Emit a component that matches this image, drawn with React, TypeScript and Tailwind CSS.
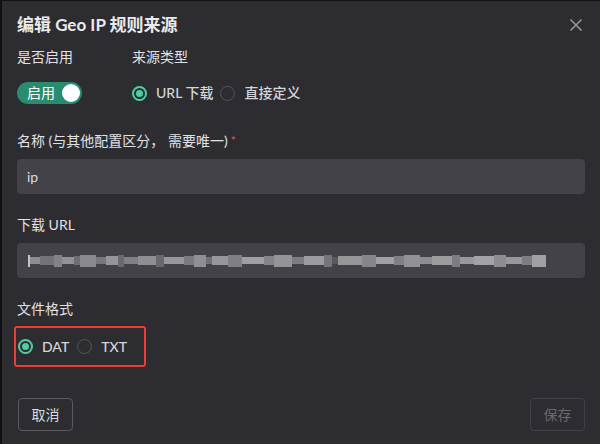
import React from "react";

const font = { fontFamily: "Lato, 'Noto Sans CJK SC', sans-serif" };

function Radio({ checked, label }: { checked: boolean; label: string }) {
  return (
    <div className="flex items-center">
      {checked ? (
        <span className="flex h-[15px] w-[15px] items-center justify-center rounded-full border-[2px] border-[#4ecfa3]">
          <span className="h-[7px] w-[7px] rounded-full bg-[#4ecfa3]" />
        </span>
      ) : (
        <span className="h-[15px] w-[15px] rounded-full border-[1.5px] border-[#56565c]" />
      )}
      <span className="ml-[9px] text-[14px] font-medium leading-[20px] text-[#d6d6d8]">{label}</span>
    </div>
  );
}

const blur: [number, string][] = [
  [2, "#d8d8d8"], [10, "#9a9a9e"], [14, "#7a7a80"], [8, "#8e8e93"], [12, "#a0a0a4"], [6, "#76767c"],
  [16, "#96969b"], [10, "#808086"], [12, "#a4a4a8"], [6, "#707076"], [14, "#8c8c91"], [18, "#9c9ca0"],
  [8, "#6e6e74"], [20, "#a8a8ac"], [10, "#84848a"], [12, "#9e9ea2"], [6, "#78787e"], [16, "#a6a6aa"],
  [14, "#8a8a8f"], [22, "#b0b0b4"], [10, "#909095"], [18, "#a2a2a6"], [12, "#86868c"], [20, "#acacb0"],
  [8, "#7c7c82"], [6, "#5a5a60"], [24, "#a4a4a8"], [14, "#929297"], [18, "#b2b2b6"], [10, "#8a8a8f"],
  [16, "#a0a0a4"], [12, "#9a9a9e"], [20, "#aaaaae"], [8, "#86868c"], [14, "#a8a8ac"], [20, "#b4b4b8"],
  [12, "#9a9a9e"], [16, "#a8a8ac"], [10, "#86868c"], [14, "#b0b0b4"],
];

export default function App() {
  return (
    <div
      className="relative flex h-[444px] w-[600px] flex-col overflow-hidden border-l-2 border-t border-[#111114] bg-[#2c2c31] pl-[15px] pr-[15px]"
      style={font}
    >
      <div className="mt-[12px] flex items-center justify-between">
        <div className="text-[17px] font-bold leading-[24px] text-[#eaeaec]">编辑 Geo IP 规则来源</div>
        <svg width="14" height="14" viewBox="0 0 14 14" className="mr-[2px]">
          <path d="M1.5 1.5 L12.5 12.5 M12.5 1.5 L1.5 12.5" stroke="#9a9a9e" strokeWidth="1.5" />
        </svg>
      </div>

      <div className="mt-[10px] flex">
        <div className="w-[115px] text-[14px] leading-[20px] text-[#e2e2e4]">是否启用</div>
        <div className="text-[14px] leading-[20px] text-[#e2e2e4]">来源类型</div>
      </div>

      <div className="mt-[15px] flex items-center">
        <div className="w-[115px]">
          <div className="flex h-[22px] w-[65px] items-center justify-between rounded-full bg-[#2a8c6f] pl-[10px] pr-[2px]">
            <span className="text-[14px] leading-[18px] text-white">启用</span>
            <span className="h-[18px] w-[18px] rounded-full bg-white" />
          </div>
        </div>
        <div className="flex items-center gap-[7px]">
          <Radio checked label="URL 下载" />
          <Radio checked={false} label="直接定义" />
        </div>
      </div>

      <div className="mt-[27px] flex text-[14px] leading-[20px] text-[#e2e2e4]">
        名称 (与其他配置区分，&nbsp;需要唯一)
        <span className="ml-[3px] text-[12px] text-[#e05555]">*</span>
      </div>
      <div className="mt-[8px] flex h-[35px] items-center rounded-[4px] bg-[#424248] px-[10px] text-[14px] text-[#dcdcde]">
        ip
      </div>

      <div className="mt-[21px] text-[14px] leading-[20px] text-[#e2e2e4]">下载 URL</div>
      <div className="mt-[8px] flex h-[35px] items-center rounded-[4px] bg-[#424248] px-[11px]">
        <div className="flex h-[14px] items-center" style={{ filter: "blur(0.7px)" }}>
          {blur.map(([w, c], i) => (
            <span
              key={i}
              className="block"
              style={{ width: w, height: i % 3 === 0 ? 12 : i % 3 === 1 ? 7 : 9, backgroundColor: c, opacity: 0.85 }}
            />
          ))}
        </div>
      </div>

      <div className="mt-[21px] text-[14px] leading-[20px] text-[#e2e2e4]">文件格式</div>
      <div className="-ml-[3px] mt-[7px] flex h-[41px] w-[132px] items-center gap-[8px] rounded-[3px] border-2 border-[#f03a3a] pl-[2px]">
        <Radio checked label="DAT" />
        <Radio checked={false} label="TXT" />
      </div>

      <div className="mt-[31px] flex items-center justify-between">
        <div className="ml-[1px] flex h-[33px] w-[55px] items-center justify-center rounded-[4px] border border-[#5a5a60] text-[14px] text-[#dcdcde]">
          取消
        </div>
        <div className="flex h-[33px] w-[55px] items-center justify-center rounded-[4px] border border-[#404046] text-[14px] text-[#6a6a70]">
          保存
        </div>
      </div>
    </div>
  );
}
